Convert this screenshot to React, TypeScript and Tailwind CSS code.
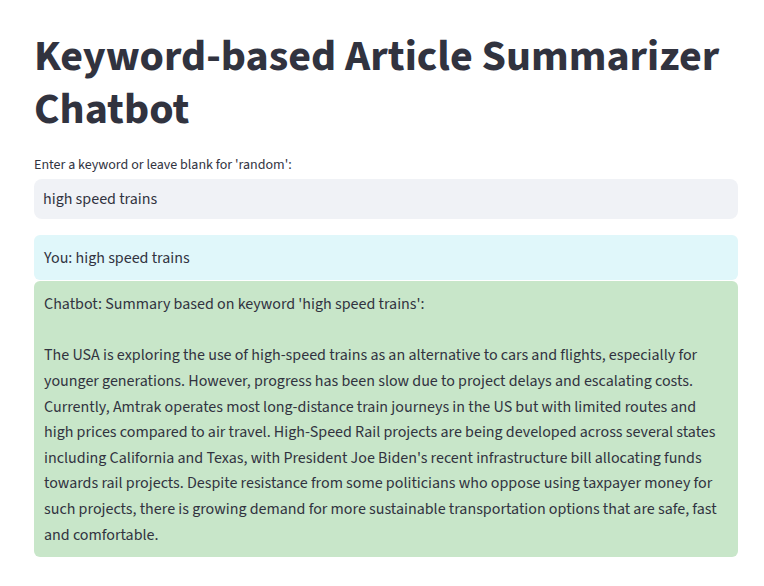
const summary =
  "The USA is exploring the use of high-speed trains as an alternative to cars and flights, especially for younger generations. However, progress has been slow due to project delays and escalating costs. Currently, Amtrak operates most long-distance train journeys in the US but with limited routes and high prices compared to air travel. High-Speed Rail projects are being developed across several states including California and Texas, with President Joe Biden's recent infrastructure bill allocating funds towards rail projects. Despite resistance from some politicians who oppose using taxpayer money for such projects, there is growing demand for more sustainable transportation options that are safe, fast and comfortable.";

export default function App() {
  return (
    <div className="min-h-[586px] bg-white pt-[31px] font-['Source_Sans_3','Source_Sans_Pro',sans-serif] text-[#31333f]">
      <div className="ml-[34px] w-[704px]">
        <h1 className="text-[44px] font-bold leading-[52.8px]">Keyword-based Article Summarizer Chatbot</h1>

        <label className="mt-[18px] block text-[14px] leading-[20px]">
          Enter a keyword or leave blank for 'random':
        </label>
        <div className="mt-[4px] flex h-[40px] items-center rounded-[8px] bg-[#f0f2f6] px-[9px] text-[16px]">
          high speed trains
        </div>

        <div className="mt-[16px] flex flex-col gap-px text-[16px] leading-[25.6px]">
          <div className="rounded-[6px] bg-[#e0f7fa] px-[10px] pt-[11px] pb-[9px]">You: high speed trains</div>
          <div className="rounded-[6px] bg-[#c8e6c9] px-[10px] pt-[11px] pb-[9px]">
            <p>Chatbot: Summary based on keyword 'high speed trains':</p>
            <p className="mt-[25.6px]">{summary}</p>
          </div>
        </div>
      </div>
    </div>
  );
}
